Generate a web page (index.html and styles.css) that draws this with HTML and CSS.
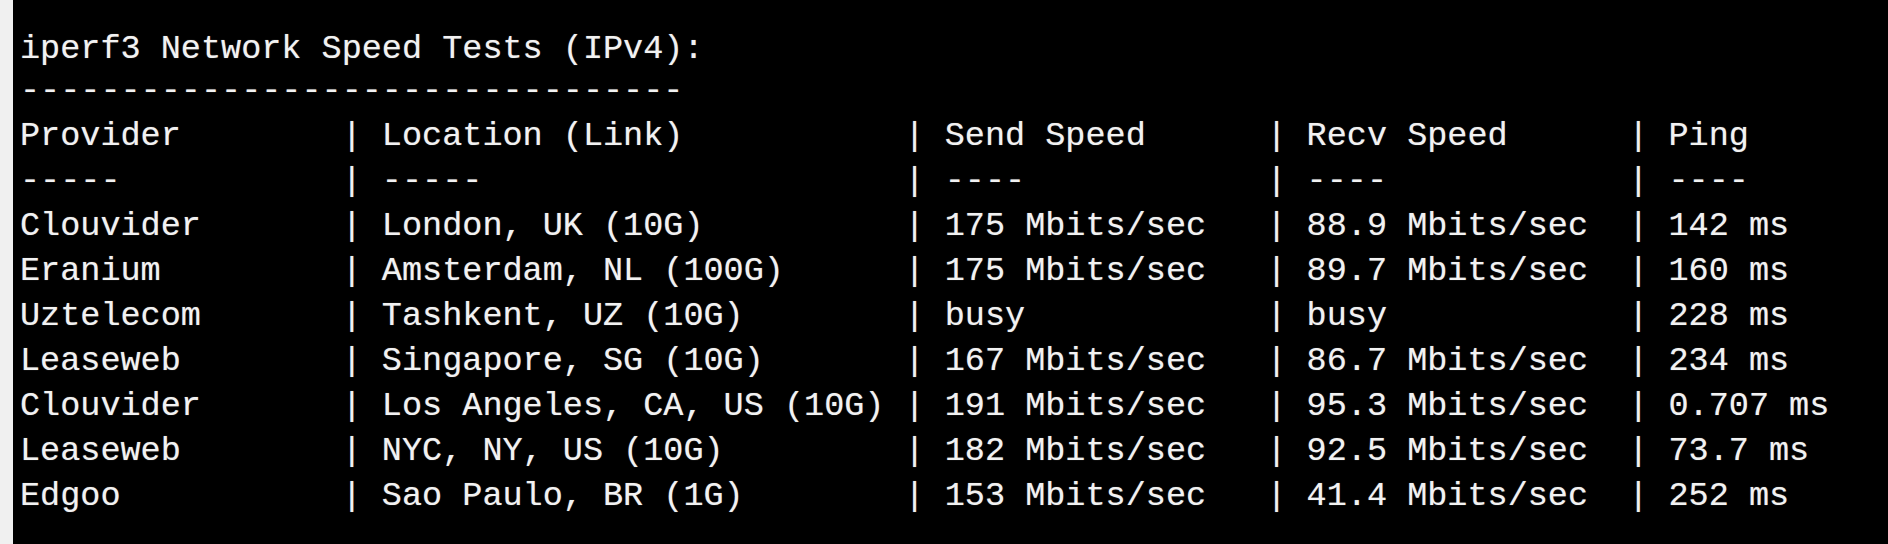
FILE: index.html
```html
<!DOCTYPE html>
<html lang="en">
<head>
<meta charset="utf-8">
<title>iperf3 Network Speed Tests</title>
<link rel="stylesheet" href="styles.css">
</head>
<body>
<main class="terminal">
<div class="line title">iperf3 Network Speed Tests (IPv4):</div>
<div class="line">---------------------------------</div>
<div class="line">Provider        | Location (Link)           | Send Speed      | Recv Speed      | Ping</div>
<div class="line">-----           | -----                     | ----            | ----            | ----</div>
<div class="line">Clouvider       | London, UK (10G)          | 175 Mbits/sec   | 88.9 Mbits/sec  | 142 ms</div>
<div class="line">Eranium         | Amsterdam, NL (100G)      | 175 Mbits/sec   | 89.7 Mbits/sec  | 160 ms</div>
<div class="line">Uztelecom       | Tashkent, UZ (10G)        | busy            | busy            | 228 ms</div>
<div class="line">Leaseweb        | Singapore, SG (10G)       | 167 Mbits/sec   | 86.7 Mbits/sec  | 234 ms</div>
<div class="line">Clouvider       | Los Angeles, CA, US (10G) | 191 Mbits/sec   | 95.3 Mbits/sec  | 0.707 ms</div>
<div class="line">Leaseweb        | NYC, NY, US (10G)         | 182 Mbits/sec   | 92.5 Mbits/sec  | 73.7 ms</div>
<div class="line">Edgoo           | Sao Paulo, BR (1G)        | 153 Mbits/sec   | 41.4 Mbits/sec  | 252 ms</div>
</main>
</body>
</html>
```

FILE: styles.css
```css
html, body {
  margin: 0;
  padding: 0;
  width: 1888px;
  height: 544px;
  overflow: hidden;
  background: #000;
}

body {
  border-left: 13px solid #f0f0f0;
  box-sizing: border-box;
}

.terminal {
  display: flex;
  flex-direction: column;
  padding: 23.5px 0 0 7px;
  font-family: "Liberation Mono", "DejaVu Sans Mono", monospace;
  font-size: 33.5px;
  line-height: 45.06px;
  color: #f2f2f2;
  text-shadow: 0 0 1px rgba(255, 255, 255, 0.45);
}

.line {
  white-space: pre;
}

.title {
  padding-top: 3px;
  margin-bottom: -3px;
}
```
